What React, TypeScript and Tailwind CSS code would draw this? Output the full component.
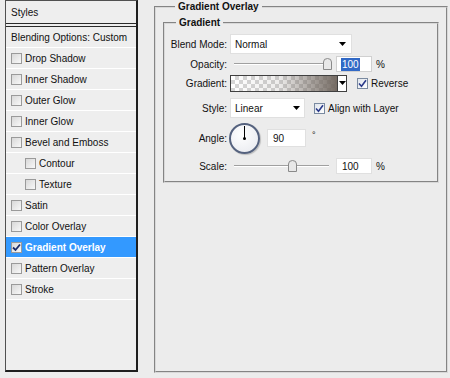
import React from "react";

function Box({ checked = false }: { checked?: boolean }) {
  return (
    <div className="w-[11px] h-[11px] shrink-0 border border-[#9a9a9a] bg-[linear-gradient(135deg,#d8d8d8,#f8f8f8)] flex items-center justify-center">
      {checked && (
        <svg width="9" height="9" viewBox="0 0 9 9">
          <path d="M1 4.5 L3.5 7 L8 1.5" fill="none" stroke="#1a2a6a" strokeWidth="1.8" />
        </svg>
      )}
    </div>
  );
}

function BlueCheck() {
  return (
    <div className="w-[11px] h-[11px] shrink-0 border border-[#7a8aa0] bg-[linear-gradient(135deg,#dfe4ec,#ffffff)] flex items-center justify-center">
      <svg width="9" height="9" viewBox="0 0 9 9">
        <path d="M1 4.5 L3.5 7.2 L8 1.2" fill="none" stroke="#2a3a8a" strokeWidth="1.6" />
      </svg>
    </div>
  );
}

function Arrow() {
  return (
    <svg width="7" height="4" viewBox="0 0 7 4">
      <path d="M0 0 H7 L3.5 4 Z" fill="#000" />
    </svg>
  );
}

function Thumb() {
  return (
    <svg width="9" height="12" viewBox="0 0 9 12">
      <path d="M0.5 11.5 V4 Q0.5 0.5 4.5 0.5 Q8.5 0.5 8.5 4 V11.5 Z" fill="#e8e8e8" stroke="#8a8a8a" />
    </svg>
  );
}

function Row({ label, indent = false, selected = false, checked = false }: { label: string; indent?: boolean; selected?: boolean; checked?: boolean }) {
  return (
    <div
      className={
        "h-[21px] shrink-0 flex items-center whitespace-nowrap border-b border-white " +
        (selected ? "bg-[#3399ff] text-white font-bold " : "") +
        (indent ? "pl-[19px]" : "pl-[5px]")
      }
    >
      <Box checked={checked} />
      <span className="ml-[3px]">{label}</span>
    </div>
  );
}

function Slider({ pos }: { pos: number }) {
  return (
    <div className="relative w-[95px] h-[16px] ml-[7px]">
      <div className="absolute left-0 right-0 top-[7px] h-[2px] border-t border-[#a0a0a0] border-b border-b-white" />
      <div className="absolute top-[2px]" style={{ left: pos }}>
        <Thumb />
      </div>
    </div>
  );
}

export default function App() {
  return (
    <div className="w-[450px] h-[378px] bg-[#ececec] flex items-start font-['Liberation_Sans',Arial,sans-serif] text-[10px] leading-[13px] text-[#111] overflow-hidden whitespace-nowrap">
      {/* Left panel */}
      <div className="ml-[5px] w-[133px] h-[372px] border-l border-t border-l-[#505050] border-t-[#505050] border-r-2 border-b-2 border-r-[#1e1e1e] border-b-[#1e1e1e] bg-[#eeeeee] flex flex-col">
        <div className="h-[26px] shrink-0 flex items-center pl-[5px] border-b-[4px] border-double border-[#2a2a2a]">Styles</div>
        <div className="h-[21px] shrink-0 flex items-center pl-[5px] border-b border-white">Blending Options: Custom</div>
        <Row label="Drop Shadow" />
        <Row label="Inner Shadow" />
        <Row label="Outer Glow" />
        <Row label="Inner Glow" />
        <Row label="Bevel and Emboss" />
        <Row label="Contour" indent />
        <Row label="Texture" indent />
        <Row label="Satin" />
        <Row label="Color Overlay" />
        <Row label="Gradient Overlay" selected checked />
        <Row label="Pattern Overlay" />
        <Row label="Stroke" />
      </div>

      {/* Right */}
      <fieldset className="ml-[16px] w-[294px] h-[373px] border-2 [border-style:groove] border-[#d8d8d8] px-[7px]">
        <legend className="ml-[12px] px-[3px] font-bold leading-[13px]">Gradient Overlay</legend>
        <fieldset className="mt-[3px] w-[276px] border-2 [border-style:groove] border-[#d8d8d8] pt-[5px] pb-[7px]">
          <legend className="ml-[11px] px-[3px] font-bold leading-[13px]">Gradient</legend>

          {/* Blend mode */}
          <div className="flex items-center h-[20px]">
            <div className="w-[62px] text-right">Blend Mode:</div>
            <div className="ml-[3px] w-[122px] h-[20px] bg-white border border-[#e0e0e0] flex items-center pl-[4px] pr-[5px] justify-between">
              <span>Normal</span>
              <Arrow />
            </div>
          </div>

          {/* Opacity */}
          <div className="flex items-center h-[16px] mt-[2px]">
            <div className="w-[62px] text-right">Opacity:</div>
            <Slider pos={89} />
            <div className="ml-[7px] w-[36px] h-[16px] bg-white border border-[#d0d0d0] flex items-center pl-[4px]">
              <span className="bg-[#3169c6] text-white px-[1px]">100</span>
            </div>
            <span className="ml-[4px]">%</span>
          </div>

          {/* Gradient */}
          <div className="flex items-center h-[18px] mt-[2px]">
            <div className="w-[62px] text-right">Gradient:</div>
            <div className="ml-[3px] h-[17px] flex border border-[#404040]">
              <div className="w-[106px] h-full bg-[image:linear-gradient(to_right,rgba(110,100,92,0)_0%,rgba(110,100,92,0.12)_45%,rgba(110,100,92,0.95)_100%),repeating-conic-gradient(#d6d6d6_0%_25%,#ffffff_0%_50%)] bg-[length:100%_100%,8px_8px]" />
              <div className="w-[9px] h-full bg-white border-l border-[#404040] flex items-center justify-center">
                <Arrow />
              </div>
            </div>
            <div className="ml-[10px]">
              <BlueCheck />
            </div>
            <span className="ml-[3px]">Reverse</span>
          </div>

          {/* Style */}
          <div className="flex items-center h-[20px] mt-[6px]">
            <div className="w-[62px] text-right">Style:</div>
            <div className="ml-[3px] w-[75px] h-[20px] bg-white border border-[#e0e0e0] flex items-center pl-[4px] pr-[4px] justify-between">
              <span>Linear</span>
              <Arrow />
            </div>
            <div className="ml-[9px]">
              <BlueCheck />
            </div>
            <span className="ml-[3px]">Align with Layer</span>
          </div>

          {/* Angle */}
          <div className="flex items-center h-[32px] mt-[4px]">
            <div className="w-[62px] text-right">Angle:</div>
            <div className="ml-[2px] w-[31px] h-[31px] rounded-full border-2 border-[#55627e] bg-[radial-gradient(circle_at_40%_35%,#ffffff,#e6e8ee)] shadow-[1px_1px_1px_rgba(0,0,0,0.2)] relative">
              <div className="absolute left-[13px] top-[1px] w-[1px] h-[13px] bg-black" />
              <div className="absolute left-[12px] top-[12px] w-[3px] h-[3px] bg-black rounded-full" />
            </div>
            <div className="ml-[7px] w-[39px] h-[18px] bg-white border border-[#e0e0e0] flex items-center pl-[5px]">90</div>
            <span className="ml-[6px] -mt-[6px] text-[9px]">°</span>
          </div>

          {/* Scale */}
          <div className="flex items-center h-[16px] mt-[4px]">
            <div className="w-[62px] text-right">Scale:</div>
            <Slider pos={54} />
            <div className="ml-[7px] w-[36px] h-[16px] bg-white border border-[#e0e0e0] flex items-center pl-[5px]">100</div>
            <span className="ml-[4px]">%</span>
          </div>
        </fieldset>
      </fieldset>
    </div>
  );
}
